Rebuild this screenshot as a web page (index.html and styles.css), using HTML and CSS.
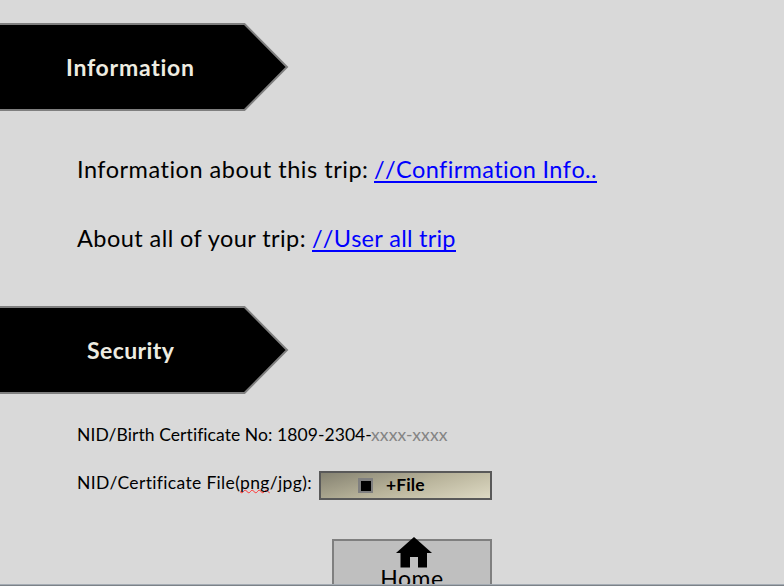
FILE: index.html
```
<!DOCTYPE html>
<html lang="en">
<head>
<meta charset="utf-8">
<title>Trip information</title>
<link rel="stylesheet" href="styles.css">
</head>
<body>
<main class="page">
  <section class="info">
    <h2 class="banner">
      <svg class="banner-shape" width="290" height="88" viewBox="0 0 290 88"><path d="M-4 1H244.500L287 44L244.500 87H-4Z"/></svg>
      <span class="banner-text info-title">Information</span>
    </h2>
    <p class="line"><span class="trip-label">Information about this trip:</span><a class="trip-link" href="#">//Confirmation Info..</a></p>
    <p class="line"><span class="all-label">About all of your trip:</span><a class="all-link" href="#">//User all trip</a></p>
  </section>
  <section class="security">
    <h2 class="banner">
      <svg class="banner-shape" width="290" height="88" viewBox="0 0 290 88"><path d="M-4 1H244.500L287 44L244.500 87H-4Z"/></svg>
      <span class="banner-text security-title">Security</span>
    </h2>
    <p class="field number"><span class="nid">NID/Birth Certificate No: 1809-2304-</span><span class="mask">xxxx-xxxx</span></p>
    <div class="field file"><span class="file-label">NID/Certificate File(<span class="misspelt">png</span>/jpg):</span>
      <button class="file-button"><span class="square"></span><span class="file-text">+File</span></button>
    </div>
  </section>
  <a class="home" href="#">
    <svg class="house" width="38" height="32" viewBox="0 0 38 32"><path d="M19 0L37 16H32V30.500H23V20H15V30.500H5.500V16H1Z"/></svg>
    <span class="home-text">Home</span>
  </a>
  <div class="edge"></div>
</main>
</body>
</html>
```
FILE: styles.css
```
* { box-sizing: border-box; }
body { margin: 0; background: #d9d9d9; color: #000; font-family: Lato, "Liberation Sans", sans-serif; font-variant-ligatures: none; }
h2, p { margin: 0; }
.page { height: 586px; padding-top: 23px; overflow: hidden; position: relative; }
.info { height: 283px; }
.security { height: 233px; }
.banner { display: grid; width: 290px; height: 88px; align-items: center; }
.banner-shape, .banner-text { grid-area: 1 / 1; }
.banner-shape path { fill: #000; stroke: #7f7f7f; stroke-width: 2; }
.banner-text { color: #eeece1; font-size: 23px; font-weight: 700; line-height: 30px; white-space: nowrap; }
.info-title { padding-left: 66px; letter-spacing: 0.75px; }
.security-title { padding-left: 87px; letter-spacing: 0.4px; }
.line { display: flex; padding-left: 77px; height: 69px; align-items: center; font-size: 23.5px; line-height: 30px; white-space: nowrap; }
.banner + .line { margin-top: 25px; }
.line a { color: #00f; text-decoration: none; border-bottom: 2px solid #00f; line-height: 24px; height: 26px; margin-top: -2px; font-kerning: none; }
.line span { padding-bottom: 3px; }
.trip-label { width: 297px; letter-spacing: 0.51px; }
.trip-link { letter-spacing: 0.34px; }
.all-label { width: 235px; letter-spacing: 0.44px; }
.all-link { letter-spacing: 0.23px; }
.field { display: flex; align-items: center; padding-left: 77px; font-size: 17.5px; line-height: 24px; white-space: nowrap; }
.number { margin-top: 29px; height: 24px; }
.nid { width: 294px; letter-spacing: 0.07px; }
.mask { color: #858585; letter-spacing: 0.1px; }
.file { margin-top: 24px; height: 29px; }
.file-label { width: 242px; padding-bottom: 5px; letter-spacing: 0.34px; }
.misspelt { text-decoration: underline wavy #f33 1px; text-underline-offset: 0px; text-decoration-skip-ink: none; }
.file-button { display: flex; align-items: center; width: 173px; height: 29px; padding: 0 0 0 37px; border: 2px solid #595959; background: linear-gradient(165deg, #858271, #b8b39a 50%, #ddd9c3); font: 700 17.5px/24px Lato, sans-serif; letter-spacing: 0.1px; color: #000; }
.file-text { padding-bottom: 2px; }
.square { width: 15px; height: 15px; margin-right: 13px; border: solid #7f7f7f; border-width: 3px 2px 2px 3px; background: #000; }
.home { display: flex; flex-direction: column; align-items: center; width: 160px; height: 60px; margin-left: 332px; border: 2px solid #7f7f7f; background: #bfbfbf; color: #000; text-decoration: none; }
.house { flex: none; margin: -4px 0 0 3px; }
.home-text { font-size: 23px; line-height: 24px; margin-top: -3px; letter-spacing: 0.5px; }
.edge { position: absolute; left: 0; right: 0; bottom: 0; height: 2px; background: #7c8288; border-top: 1px solid #a4abb3; }
```
